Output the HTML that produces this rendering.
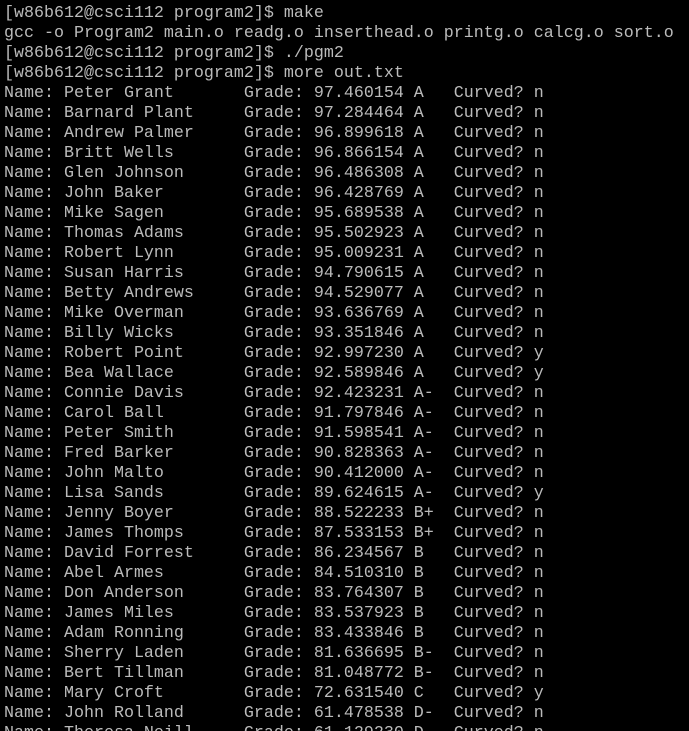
<!DOCTYPE html>
<html><head><style>
html,body{margin:0;padding:0;background:#000;width:689px;height:731px;overflow:hidden}
pre{margin:0;padding:4px 0 0 4px;font-family:"Liberation Mono","Courier New",monospace;font-size:16.67px;line-height:20px;color:#bbbbbb;white-space:pre}
</style></head><body><pre>[w86b612@csci112 program2]$ make
gcc -o Program2 main.o readg.o inserthead.o printg.o calcg.o sort.o
[w86b612@csci112 program2]$ ./pgm2
[w86b612@csci112 program2]$ more out.txt
Name: Peter Grant       Grade: 97.460154 A   Curved? n
Name: Barnard Plant     Grade: 97.284464 A   Curved? n
Name: Andrew Palmer     Grade: 96.899618 A   Curved? n
Name: Britt Wells       Grade: 96.866154 A   Curved? n
Name: Glen Johnson      Grade: 96.486308 A   Curved? n
Name: John Baker        Grade: 96.428769 A   Curved? n
Name: Mike Sagen        Grade: 95.689538 A   Curved? n
Name: Thomas Adams      Grade: 95.502923 A   Curved? n
Name: Robert Lynn       Grade: 95.009231 A   Curved? n
Name: Susan Harris      Grade: 94.790615 A   Curved? n
Name: Betty Andrews     Grade: 94.529077 A   Curved? n
Name: Mike Overman      Grade: 93.636769 A   Curved? n
Name: Billy Wicks       Grade: 93.351846 A   Curved? n
Name: Robert Point      Grade: 92.997230 A   Curved? y
Name: Bea Wallace       Grade: 92.589846 A   Curved? y
Name: Connie Davis      Grade: 92.423231 A-  Curved? n
Name: Carol Ball        Grade: 91.797846 A-  Curved? n
Name: Peter Smith       Grade: 91.598541 A-  Curved? n
Name: Fred Barker       Grade: 90.828363 A-  Curved? n
Name: John Malto        Grade: 90.412000 A-  Curved? n
Name: Lisa Sands        Grade: 89.624615 A-  Curved? y
Name: Jenny Boyer       Grade: 88.522233 B+  Curved? n
Name: James Thomps      Grade: 87.533153 B+  Curved? n
Name: David Forrest     Grade: 86.234567 B   Curved? n
Name: Abel Armes        Grade: 84.510310 B   Curved? n
Name: Don Anderson      Grade: 83.764307 B   Curved? n
Name: James Miles       Grade: 83.537923 B   Curved? n
Name: Adam Ronning      Grade: 83.433846 B   Curved? n
Name: Sherry Laden      Grade: 81.636695 B-  Curved? n
Name: Bert Tillman      Grade: 81.048772 B-  Curved? n
Name: Mary Croft        Grade: 72.631540 C   Curved? y
Name: John Rolland      Grade: 61.478538 D-  Curved? n
Name: Theresa Neill     Grade: 61.129230 D-  Curved? n</pre></body></html>
